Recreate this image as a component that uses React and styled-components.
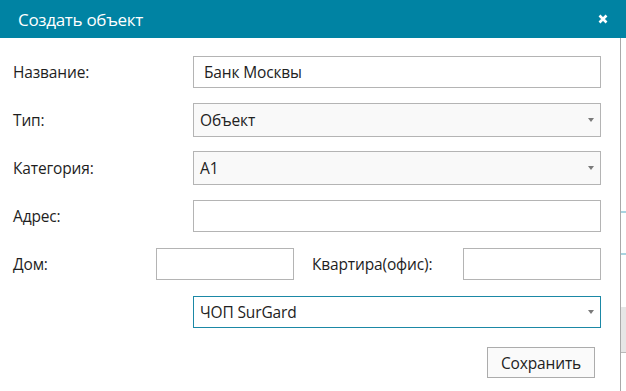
import React from "react";
import styled, { createGlobalStyle } from "styled-components";

const GlobalStyle = createGlobalStyle`
  html, body {
    margin: 0;
    padding: 0;
    background: #ffffff;
  }
  body {
    font-family: "Open Sans", "Liberation Sans", sans-serif;
    color: #1e1e1e;
  }
`;

const Dialog = styled.div`
  width: 626px;
  height: 391px;
  display: flex;
  flex-direction: column;
  overflow: hidden;
`;

const Header = styled.div`
  height: 38px;
  flex: none;
  background: #0083a3;
  display: flex;
  align-items: center;
  justify-content: space-between;
  padding: 0 18px 0 18px;
`;

const Title = styled.div`
  color: #ffffff;
  font-size: 17px;
  letter-spacing: -0.3px;
`;

const Close = styled.div`
  width: 10px;
  height: 10px;
  display: flex;
  svg {
    display: block;
  }
`;

const Body = styled.div`
  flex: 1;
  display: flex;
`;

const Form = styled.div`
  box-sizing: border-box;
  width: 621px;
  flex: none;
  border-right: 1px solid #a9a9a9;
  padding: 10px 19px 0 13px;
  display: flex;
  flex-direction: column;
`;

const Edge = styled.div`
  flex: 1;
  display: flex;
  flex-direction: column;
`;

const EdgeTick = styled.div`
  height: 2px;
  margin-top: ${(p) => p.top}px;
  background: #a9d4e0;
`;

const EdgeBox = styled.div`
  height: 45px;
  margin-top: ${(p) => p.top}px;
  background: #e6e6e6;
  border-bottom: 1px solid #b9b9b9;
`;

const Row = styled.div`
  height: 48px;
  display: grid;
  grid-template-columns: 180px 1fr;
  align-items: center;
`;

const SplitRow = styled(Row)`
  grid-template-columns: 143px 138px 1fr 138px;
`;

const Label = styled.div`
  font-size: 15.5px;
  letter-spacing: -0.15px;
  padding-left: ${(p) => p.indent || 0}px;
  white-space: nowrap;
`;

const Input = styled.div`
  box-sizing: border-box;
  height: 32px;
  border: 1px solid #b4b4b4;
  background: #ffffff;
  padding: 0 10px;
  display: flex;
  align-items: center;
  font-size: 15.5px;
  letter-spacing: -0.15px;
  color: #222;
`;

const Select = styled.div`
  box-sizing: border-box;
  height: ${(p) => (p.focused ? 32 : 34)}px;
  border: 1px solid ${(p) => (p.focused ? "#1b88a6" : "#b4b4b4")};
  background: ${(p) => (p.focused ? "#ffffff" : "#f9f9f9")};
  padding: 0 6px 0 6px;
  display: flex;
  align-items: center;
  justify-content: space-between;
  font-size: 15.5px;
  letter-spacing: -0.15px;
  color: #222;
`;

const Caret = styled.span`
  width: 0;
  height: 0;
  border-left: 3.5px solid transparent;
  border-right: 3.5px solid transparent;
  border-top: 4px solid #7a7a7a;
`;

const Footer = styled.div`
  display: flex;
  justify-content: flex-end;
  padding: 11px 6px 0 0;
`;

const Button = styled.button`
  box-sizing: border-box;
  width: 108px;
  height: 31px;
  border: 1px solid #acacac;
  background: #fafafa;
  font-family: inherit;
  font-size: 15.5px;
  letter-spacing: -0.15px;
  color: #222;
  padding: 0;
  cursor: pointer;
`;

const Empty = styled.div``;

export default function App() {
  return (
    <>
      <GlobalStyle />
      <Dialog>
        <Header>
          <Title>Создать объект</Title>
          <Close>
            <svg width="10" height="10" viewBox="0 0 10 10">
              <path d="M1.5 1.5 L8.5 8.5 M8.5 1.5 L1.5 8.5" stroke="#ffffff" strokeWidth="2.6" />
            </svg>
          </Close>
        </Header>
        <Body>
          <Form>
            <Row>
              <Label>Название:</Label>
              <Input>Банк Москвы</Input>
            </Row>
            <Row>
              <Label>Тип:</Label>
              <Select>
                Объект
                <Caret />
              </Select>
            </Row>
            <Row>
              <Label>Категория:</Label>
              <Select>
                А1
                <Caret />
              </Select>
            </Row>
            <Row>
              <Label>Адрес:</Label>
              <Input />
            </Row>
            <SplitRow>
              <Label>Дом:</Label>
              <Input />
              <Label indent={18}>Квартира(офис):</Label>
              <Input />
            </SplitRow>
            <Row>
              <Empty />
              <Select focused>
                ЧОП SurGard
                <Caret />
              </Select>
            </Row>
            <Footer>
              <Button>Сохранить</Button>
            </Footer>
          </Form>
          <Edge>
            <EdgeTick top={173} />
            <EdgeTick top={40} />
            <EdgeBox top={52} />
          </Edge>
        </Body>
      </Dialog>
    </>
  );
}
